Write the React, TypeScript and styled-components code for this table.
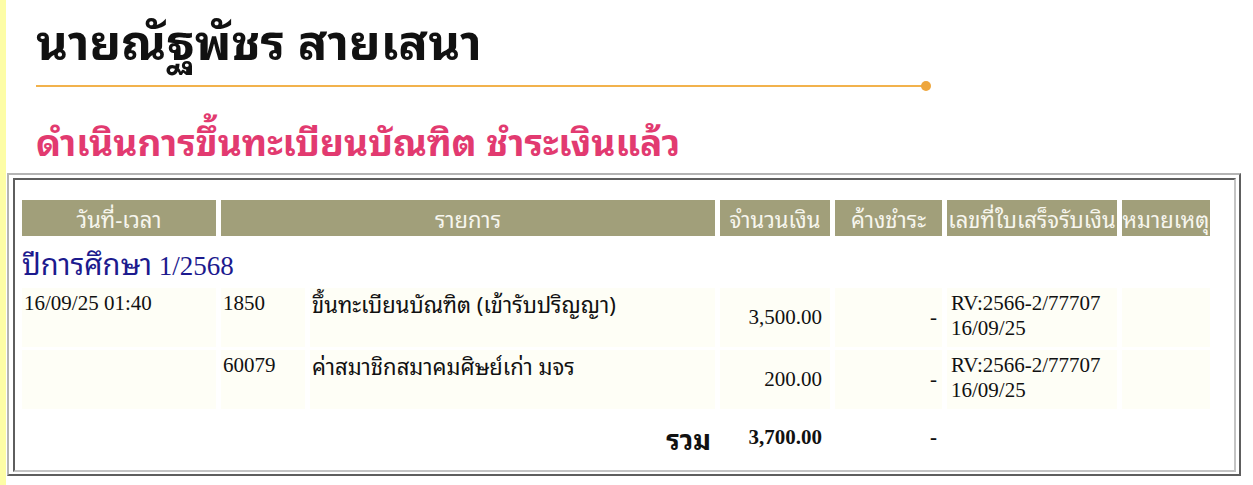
import styled, { createGlobalStyle } from 'styled-components';

const GlobalStyle = createGlobalStyle`
  html, body {
    margin: 0;
    padding: 0;
    background: #ffffff;
  }
  body {
    font-family: "Liberation Serif", "DejaVu Serif", serif;
  }
`;

interface IItem {
  date: string;
  code: string;
  name: string;
  amount: string;
  owed: string;
  receipt: string;
  receiptDate: string;
}

const items: IItem[] = [
  {
    date: '16/09/25 01:40',
    code: '1850',
    name: 'ขึ้นทะเบียนบัณฑิต (เข้ารับปริญญา)',
    amount: '3,500.00',
    owed: '-',
    receipt: 'RV:2566-2/77707',
    receiptDate: '16/09/25'
  },
  {
    date: '',
    code: '60079',
    name: 'ค่าสมาชิกสมาคมศิษย์เก่า มจร',
    amount: '200.00',
    owed: '-',
    receipt: 'RV:2566-2/77707',
    receiptDate: '16/09/25'
  }
];

export default function App() {
  return (
    <Page>
      <GlobalStyle />
      <Heading>
        <Name>นายณัฐพัชร สายเสนา</Name>
        <Rule />
        <Status>ดำเนินการขึ้นทะเบียนบัณฑิต ชำระเงินแล้ว</Status>
      </Heading>

      <OuterFrame>
        <InnerFrame>
          <Table>
            <colgroup>
              <col style={{ width: 194 }} />
              <col style={{ width: 84 }} />
              <col style={{ width: 405 }} />
              <col style={{ width: 110 }} />
              <col style={{ width: 107 }} />
              <col style={{ width: 170 }} />
              <col style={{ width: 88 }} />
            </colgroup>
            <thead>
              <tr>
                <Th>วันที่-เวลา</Th>
                <Th colSpan={2}>รายการ</Th>
                <Th>จำนวนเงิน</Th>
                <Th>ค้างชำระ</Th>
                <Th>เลขที่ใบเสร็จรับเงิน</Th>
                <Th>หมายเหตุ</Th>
              </tr>
            </thead>
            <tbody>
              <tr>
                <YearCell colSpan={7}>
                  <YearThai>ปีการศึกษา</YearThai> 1/2568
                </YearCell>
              </tr>
              {items.map((item) => (
                <tr key={item.code}>
                  <Td>{item.date}</Td>
                  <Td>{item.code}</Td>
                  <Td>
                    <ThaiText>{item.name}</ThaiText>
                  </Td>
                  <Td $align="right" $valign="middle" $padRight={8}>
                    {item.amount}
                  </Td>
                  <Td $align="right" $valign="middle" $padRight={5}>
                    {item.owed}
                  </Td>
                  <Td $padLeft={4}>
                    {item.receipt}
                    <br />
                    {item.receiptDate}
                  </Td>
                  <Td />
                </tr>
              ))}
              <tr>
                <TotalCell colSpan={3} $align="right" $padRight={4}>
                  <ThaiBold>รวม</ThaiBold>
                </TotalCell>
                <TotalCell $align="right" $padRight={8}>
                  3,700.00
                </TotalCell>
                <TotalCell $align="right" $padRight={5}>
                  -
                </TotalCell>
                <TotalCell />
                <TotalCell />
              </tr>
            </tbody>
          </Table>
        </InnerFrame>
      </OuterFrame>
    </Page>
  );
}

const thai = `"Tahoma", "Noto Sans Thai Looped", "Noto Looped Thai", "Loma", "Noto Sans Thai", "DejaVu Sans", sans-serif`;

const Page = styled.div`
  min-height: 485px;
  box-sizing: border-box;
  border-left: 6px solid #fdfda6;
  padding: 0 0 10px 1px;
`;

const Heading = styled.div`
  padding: 6px 0 0 29px;
`;

const Name = styled.h1`
  margin: 0;
  font-family: ${thai};
  font-size: 49px;
  font-weight: bold;
  color: #111111;
  line-height: 64px;
`;

const Rule = styled.div`
  position: relative;
  width: 890px;
  height: 2px;
  margin-top: 15px;
  background: #f2b24c;

  &::after {
    content: '';
    position: absolute;
    right: -5px;
    top: -4px;
    width: 10px;
    height: 10px;
    border-radius: 50%;
    background: #eea63c;
  }
`;

const Status = styled.h2`
  margin: 28px 0 0;
  font-family: ${thai};
  font-size: 37px;
  font-weight: bold;
  color: #e23a70;
  line-height: 50px;
`;

const OuterFrame = styled.div`
  width: 1234px;
  box-sizing: border-box;
  margin-top: 8px;
  border: 2px solid;
  border-color: #b4b4b4 #5e5e5e #5e5e5e #b4b4b4;
  padding: 3px 3px 2px 4px;
`;

const InnerFrame = styled.div`
  border: 2px solid;
  border-color: #5e5e5e #c4c4c4 #c4c4c4 #5e5e5e;
  padding: 17px 0 4px 2px;
`;

const Table = styled.table`
  table-layout: fixed;
  border-collapse: separate;
  border-spacing: 5px 3px;
`;

const Th = styled.th`
  height: 36px;
  padding: 0;
  background: #a19f7a;
  color: #f7f6ee;
  font-family: ${thai};
  font-size: 22px;
  font-weight: normal;
  white-space: nowrap;
  text-align: center;
  overflow: hidden;
`;

const YearCell = styled.td`
  height: 42px;
  padding: 4px 0 0 0;
  color: #1c1a8e;
  font-size: 27px;
  line-height: 34px;
  vertical-align: middle;
`;

const YearThai = styled.span`
  font-family: ${thai};
  font-size: 29px;
`;

const Td = styled.td<{
  $align?: 'left' | 'right';
  $valign?: 'top' | 'middle';
  $padRight?: number;
  $padLeft?: number;
}>`
  height: 53px;
  padding: 3px ${(p) => p.$padRight ?? 2}px 3px ${(p) => p.$padLeft ?? 2}px;
  background: #fefef6;
  color: #111111;
  font-size: 21px;
  line-height: 25px;
  text-align: ${(p) => p.$align ?? 'left'};
  vertical-align: ${(p) => p.$valign ?? 'top'};
`;

const ThaiText = styled.span`
  font-family: ${thai};
  font-size: 22px;
`;

const TotalCell = styled.td<{ $align?: 'left' | 'right'; $padRight?: number }>`
  height: 51px;
  padding: 0 ${(p) => p.$padRight ?? 2}px 0 2px;
  font-size: 21px;
  font-weight: bold;
  color: #111111;
  text-align: ${(p) => p.$align ?? 'left'};
  vertical-align: middle;
`;

const ThaiBold = styled.span`
  font-family: ${thai};
  font-size: 27px;
  font-weight: bold;
`;
